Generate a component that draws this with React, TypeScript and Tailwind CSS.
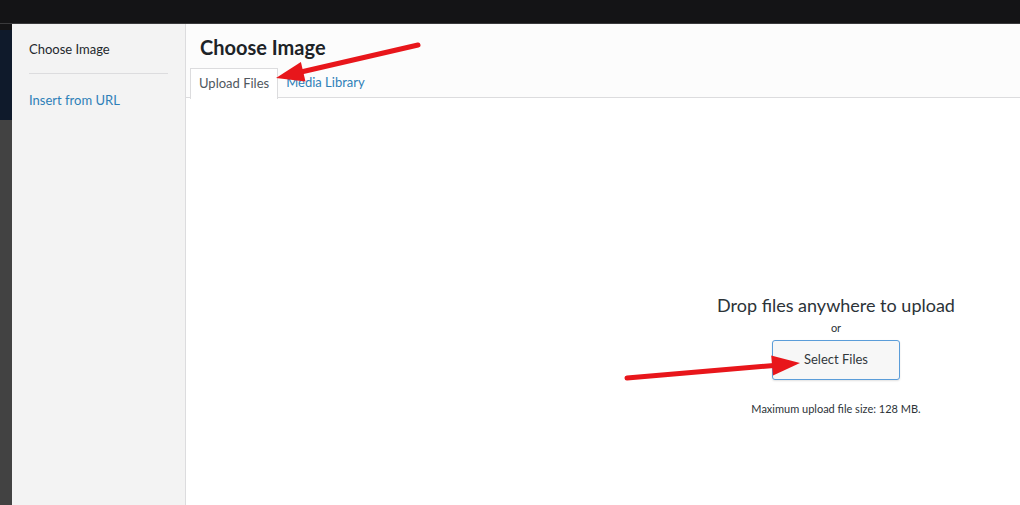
const Arrows = () => {
  return (
    <svg
      className="pointer-events-none absolute left-0 top-0"
      width="1020"
      height="505"
      viewBox="0 0 1020 505"
    >
      <line x1="418" y1="45" x2="301" y2="72" stroke="#e8161b" strokeWidth="5" strokeLinecap="round" />
      <polygon points="276,78 305.5,81.4 300.9,62" fill="#e8161b" />
      <line x1="627" y1="378" x2="774" y2="365.4" stroke="#e8161b" strokeWidth="5" strokeLinecap="round" />
      <polygon points="800,363 773,375.4 771.2,355.4" fill="#e8161b" />
    </svg>
  );
};

const Sidebar = () => {
  return (
    <div className="w-[174px] shrink-0 border-r border-[#dcdcde] bg-[#f3f3f3] px-[17px] pt-[16px]">
      <div className="text-[13px] leading-[18px] text-[#23282d]">Choose Image</div>
      <div className="mt-[15px] border-t border-[#dcdcde]" />
      <div className="mt-[17px] text-[13px] leading-[18px] text-[#2e7fb8]">Insert from URL</div>
    </div>
  );
};

const Header = () => {
  return (
    <div className="h-[74px] border-b border-[#dcdcde] bg-[#fcfcfc] pl-[4px]">
      <h1 className="pl-[10px] pt-[10px] text-[20px] font-bold leading-[26px] text-[#1d2327]">
        Choose Image
      </h1>
      <div className="mt-[8px] flex items-end">
        <div className="-mb-px flex h-[31px] items-center border border-b-0 border-[#dcdcde] bg-white px-[8px] text-[13px] text-[#50575e]">
          Upload Files
        </div>
        <div className="flex h-[30px] items-center px-[8px] text-[13px] text-[#2e7fb8]">
          Media Library
        </div>
      </div>
    </div>
  );
};

const Uploader = () => {
  return (
    <div className="ml-[500px] flex w-[300px] flex-col items-center pt-[194px]">
      <div className="whitespace-nowrap text-[18px] leading-[26px] text-[#2c3338]">
        Drop files anywhere to upload
      </div>
      <div className="mt-[3px] text-[11px] leading-[14px] text-[#2c3338]">or</div>
      <button className="mt-[5px] h-[40px] w-[128px] rounded-[3px] border border-[#5b9dd9] bg-[#f7f7f7] text-[13px] text-[#32373c] shadow-[0_1px_2px_rgba(0,0,0,0.12)]">
        Select Files
      </button>
      <div className="mt-[22px] whitespace-nowrap text-[11px] leading-[14px] text-[#2c3338]">
        Maximum upload file size: 128 MB.
      </div>
    </div>
  );
};

export default function App() {
  return (
    <div
      className="relative h-[505px] w-[1020px] overflow-hidden bg-[#141416]"
      style={{ fontFamily: 'Lato, "Noto Sans", sans-serif' }}
    >
      <div className="h-[24px] border-b border-[#3a3a3c] bg-[#141416]" />
      <div className="flex h-[481px]">
        <div className="flex w-[12px] shrink-0 flex-col">
          <div className="h-[6px] bg-[#141416]" />
          <div className="h-[90px] bg-[#0f1a2b]" />
          <div className="flex-1 bg-[#424242]" />
        </div>
        <div className="flex flex-1">
          <Sidebar />
          <div className="flex flex-1 flex-col bg-white">
            <Header />
            <Uploader />
          </div>
        </div>
      </div>
      <Arrows />
    </div>
  );
}
